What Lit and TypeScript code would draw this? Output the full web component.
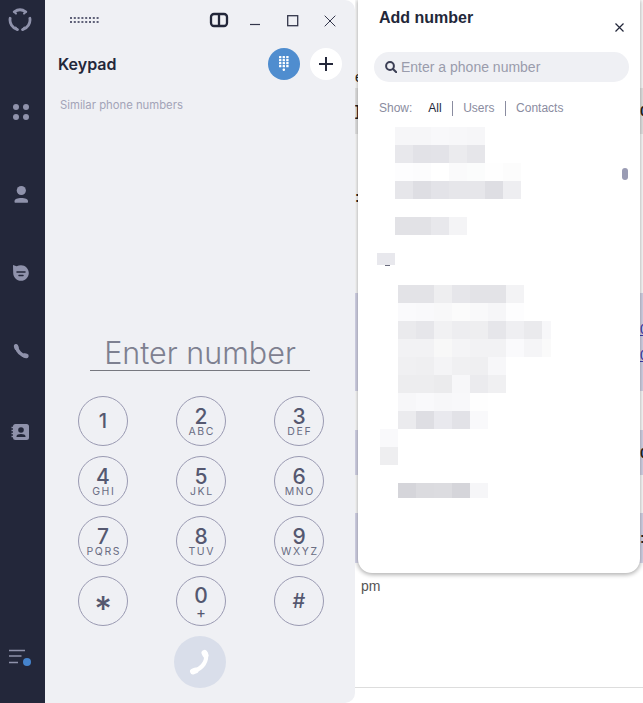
import { LitElement, html, css, svg } from "lit";
import { customElement } from "lit/decorators.js";

const KEYS: [string, string][] = [
  ["1", ""], ["2", "ABC"], ["3", "DEF"],
  ["4", "GHI"], ["5", "JKL"], ["6", "MNO"],
  ["7", "PQRS"], ["8", "TUV"], ["9", "WXYZ"],
  ["*", ""], ["0", "+"], ["#", ""],
];

// redacted contact rows: left indent from list edge, gap above, height, cell colours
const MOSAIC: { x: number; gap: number; h: number; cells: string[]; half?: string }[] = [
  { x: 0, gap: 0, h: 18, cells: ["f6f6f8", "f6f6f8", "f8f8fa", "f7f7f9", "f6f6f8"] },
  { x: 0, gap: 0, h: 18, cells: ["e8e8ec", "e2e2e7", "e3e3e8", "ebebee", "e6e6ea"] },
  { x: 0, gap: 0, h: 18, cells: ["fdfdfe", "fcfcfd", "ffffff", "fafafb", "fbfcfc", "fefefe", "fcfcfc"] },
  { x: 0, gap: 0, h: 18, cells: ["e6e6ea", "dedee3", "e3e3e8", "e6e6ea", "e6e6ea", "dedee3", "eeeef1"] },
  { x: 0, gap: 18, h: 18, cells: ["e2e2e6", "e2e2e6", "e8e8ec", "f4f4f6"] },
  { x: -18, gap: 18, h: 12, cells: ["e8e8ed"] },
  { x: 3, gap: 19, h: 18, cells: ["e3e3e7", "e3e3e7", "eeeef0", "e6e6ea", "e3e3e7", "e3e3e7", "f3f3f5"] },
  { x: 3, gap: 0, h: 18, cells: ["fafafc", "f9f9fb", "f8f8f9", "fbfbfb", "f9f9fa", "f6f6f8", "fdfdfe"] },
  { x: 3, gap: 0, h: 18, cells: ["eaeaed", "e6e6ea", "f1f1f3", "ededf0", "eeeef0", "e6e6ea", "efeff2", "eaeaed"], half: "f7f7f9" },
  { x: 3, gap: 0, h: 18, cells: ["f2f2f4", "f2f2f4", "f8f8f8", "f4f4f6", "f2f2f4", "f2f2f4", "fafafc", "f5f5f7"], half: "fafafa" },
  { x: 3, gap: 0, h: 18, cells: ["f0f0f2", "efeff1", "f4f4f6", "f0f0f2", "efeff1", "f7f7f9"] },
  { x: 3, gap: 0, h: 18, cells: ["ededef", "ededef", "ebebed", "f7f7f9", "ebebee", "f0f0f2"] },
  { x: 3, gap: 0, h: 18, cells: ["f7f7f9", "f9f9fb", "f7f7f9", "f8f8fa", "fefefe"] },
  { x: 3, gap: 0, h: 18, cells: ["ebebee", "dedee3", "e9e9ee", "e2e2e7", "f9f9fb"] },
  { x: -15, gap: 0, h: 18, cells: ["f9f9fb"] },
  { x: -15, gap: 0, h: 18, cells: ["eeeef0"] },
  { x: 3, gap: 18, h: 15, cells: ["d5d5da", "dbdbdf", "dcdce0", "d5d5da", "f6f6f8"] },
];

const dots = svg`${[0, 1].map((r) =>
  [0, 1, 2, 3, 4, 5, 6, 7].map(
    (c) => svg`<rect x=${c * 3.8} y=${r * 4} width="2" height="2" fill="#5f6178"></rect>`
  )
)}`;

@customElement("app-root")
export class AppRoot extends LitElement {
  static styles = css`
    :host {
      display: block;
      width: 643px;
      height: 703px;
      overflow: hidden;
      background: #fff;
      font-family: "Liberation Sans", sans-serif;
    }
    .app {
      display: flex;
      height: 703px;
    }
    .side {
      flex: 0 0 45px;
      background: #23273a;
      display: flex;
      flex-direction: column;
      padding: 8px 0 31px 9px;
      box-sizing: border-box;
      position: relative;
      z-index: 3;
    }
    .side svg {
      display: block;
      width: 24px;
      height: 24px;
      flex: none;
    }
    .side svg:nth-child(1) { margin-left: -1px; }
    .side svg:nth-child(2) { margin-top: 68px; }
    .side svg:nth-child(3) { margin-top: 59px; }
    .side svg:nth-child(4) { margin-top: 54px; }
    .side svg:nth-child(5) { margin-top: 54px; }
    .side svg:nth-child(6) { margin-top: 57px; }
    .side svg:nth-child(7) { margin-top: auto; }

    .panel {
      flex: 0 0 310px;
      background: #eff0f4;
      border-radius: 0 10px 10px 0;
      display: flex;
      flex-direction: column;
      box-sizing: border-box;
      padding-bottom: 15px;
      position: relative;
      z-index: 2;
    }
    .topbar {
      height: 48px;
      display: flex;
      align-items: flex-start;
      flex: none;
    }
    .grip { width: 30px; height: 6px; margin: 17px 0 0 25px; display: block; }
    .winbtns { display: flex; margin-left: auto; }
    .winbtns svg { display: block; }
    .split { width: 20px; height: 16px; margin: 12px 0 0 0; }
    .min { width: 12px; height: 12px; margin: 14px 0 0 20px; }
    .max { width: 12px; height: 12px; margin: 14.5px 0 0 26px; }
    .close { width: 12px; height: 12px; margin: 14.5px 19px 0 25px; }

    .head {
      display: flex;
      align-items: center;
      height: 32px;
      flex: none;
      padding: 0 13px;
    }
    .title {
      font: 600 16px Inter, sans-serif;
      color: #23273a;
    }
    .round {
      width: 32px;
      height: 32px;
      border-radius: 50%;
      display: flex;
      align-items: center;
      justify-content: center;
    }
    .round.blue { background: #4f8dcf; margin-left: auto; }
    .round.white { background: #fff; margin-left: 10px; }
    .similar {
      font: 400 11.3px Inter, sans-serif;
      color: #a3a4b8;
      margin: 18px 0 0 15px;
      line-height: 14px;
    }
    .number {
      margin: auto 45px 0 45px;
      height: 37px;
      border-bottom: 1px solid #77787f;
      font: 300 30.5px Inter, sans-serif;
      line-height: 39px;
      color: #7e8090;
      text-align: center;
    }
    .keys {
      display: grid;
      grid-template-columns: repeat(3, 50px);
      column-gap: 48px;
      row-gap: 10px;
      margin: 25px 0 0 33px;
    }
    .key {
      width: 50px;
      height: 50px;
      box-sizing: border-box;
      border: 1px solid #9a9ab2;
      border-radius: 50%;
      display: flex;
      flex-direction: column;
      align-items: center;
      justify-content: center;
      color: #555870;
      font-family: Inter, sans-serif;
    }
    .digit { font-size: 21px; font-weight: 500; line-height: 21px; }
    .letters {
      font-size: 10.5px;
      line-height: 10px;
      letter-spacing: 1.6px;
      margin-right: -1.6px;
      color: #696c82;
    }
    .key.solo .digit { font-size: 20px; }
    .key.star .digit { font-size: 34px; line-height: 34px; padding-top: 15px; }
    .key.plus .letters { font-size: 15px; letter-spacing: 0; margin: 1px 0 -2px; line-height: 12px; color: #555870; }
    .call {
      width: 52px;
      height: 52px;
      border-radius: 50%;
      background: #d9deea;
      margin: 10px auto 0;
      display: flex;
      align-items: center;
      justify-content: center;
      flex: none;
    }

    .main {
      flex: 1;
      position: relative;
      min-width: 0;
      display: flex;
      flex-direction: column;
      font-size: 14px;
      color: #222;
      overflow: hidden;
    }
    .row {
      display: grid;
      grid-template-columns: 285px 3px;
      flex: none;
      box-sizing: border-box;
    }
    .row span { display: block; }
    .r0 { height: 88px; align-items: end; }
    .r1 { height: 46px; background: #e9e9e9; align-items: center; font-weight: 700; }
    .r2 { height: 159px; padding-top: 55px; font-weight: 700; align-items: start; }
    .r3 { height: 98px; background: #d8d8ec; align-items: center; }
    .r4 { height: 39px; }
    .r5 { height: 45px; background: #d8d8ec; align-items: center; font-weight: 700; }
    .r6 { height: 38px; }
    .r7 { height: 50px; background: #d8d8ec; align-items: center; font-weight: 700; }
    .r8 { height: 14px; }
    .r0 span { line-height: 18px; margin-bottom: 2px; }
    .links a { display: block; color: #3b3bb0; text-decoration: underline; line-height: 26px; }
    .pm {
      flex: none;
      height: 111px;
      box-sizing: border-box;
      padding-left: 6px;
      line-height: 18px;
      color: #555;
      border-bottom: 1px solid #ddd;
    }

    .popup {
      position: absolute;
      left: 3px;
      top: 0;
      width: 282px;
      height: 573px;
      box-sizing: border-box;
      background: #fff;
      border-radius: 0 0 14px 14px;
      box-shadow: 0 1px 4px 1px rgba(0, 0, 0, 0.3);
      padding: 9px 0 0 0;
      display: flex;
      flex-direction: column;
    }
    .ptop {
      display: flex;
      padding: 0 16px 0 21px;
      height: 35px;
      flex: none;
    }
    .ptitle {
      font-weight: 700;
      font-size: 16px;
      line-height: 18px;
      color: #23273a;
    }
    .pclose { width: 9px; height: 9px; margin: 14px 0 0 auto; display: block; }
    .search {
      margin: 8px 11px 0 16px;
      height: 30px;
      border-radius: 15px;
      background: #eff0f4;
      display: flex;
      align-items: center;
      padding-left: 11px;
      gap: 4px;
      font-size: 14px;
      color: #9a9cac;
      flex: none;
    }
    .filters {
      display: flex;
      align-items: center;
      margin: 18px 0 0 21px;
      height: 16px;
      font-size: 12px;
      color: #8a8ca0;
      flex: none;
    }
    .filters .all { color: #23273a; margin-left: 16px; }
    .sep { width: 1px; height: 15px; background: #8a8ca0; margin: 0 10px 0 10.5px; }
    .list { margin: 11px 0 0 37px; }
    .mrow { display: flex; }
    .mrow i { display: block; width: 18px; height: 100%; flex: none; }
    .mrow i.half { width: 9px; }
    .dash { width: 5px; height: 1px; background: #6a6c7e; margin-left: -10px; }
    .thumb {
      position: absolute;
      left: 264px;
      top: 168px;
      width: 6px;
      height: 12px;
      border-radius: 3px;
      background: #9a9cb4;
    }
  `;

  render() {
    return html`
      <div class="app">
        <nav class="side">
          <svg viewBox="0 0 24 24" fill="none" stroke="#8f92ab" stroke-width="2.8" stroke-linecap="round">
            <path d="M6.26 3.81A10 10 0 0 1 17.74 3.81"></path>
            <path d="M2.15 10.26A10 10 0 0 0 9.41 21.66"></path>
            <path d="M21.85 10.26A10 10 0 0 1 14.59 21.66"></path>
            <path d="M6.3 3.8L8 5.6M17.7 3.800L16 5.600" stroke-width="2"></path>
            <path d="M9.400 21.600L7.500 19.500M14.600 21.600L16.500 19.500" stroke-width="2"></path>
          </svg>
          <svg viewBox="0 0 24 24" fill="#8f92ab">
            <circle cx="7" cy="7" r="3"></circle><circle cx="17" cy="7" r="3"></circle>
            <circle cx="7" cy="17" r="3"></circle><circle cx="17" cy="17" r="3"></circle>
          </svg>
          <svg viewBox="0 0 24 24" fill="#8f92ab">
            <circle cx="12.3" cy="7.5" r="4.6"></circle>
            <path d="M5.500 18.500c0-2.600 3-3.500 6.800-3.500s6.700.9 6.700 3.500v.5c0 .4-.3.7-.7.7H6.200c-.4 0-.7-.3-.7-.7z"></path>
          </svg>
          <svg viewBox="0 0 24 24">
            <path fill="#8f92ab" d="M4 4l3.600 1.200C9 4.500 10.500 4.200 12 4.200c4.300 0 7.800 3.500 7.800 7.800s-3.500 7.800-7.800 7.800-7.800-3.500-7.800-7.800c0-1.500-.2-5-.2-8z"></path>
            <path stroke="#23273a" stroke-width="1.500" stroke-linecap="round" d="M8 11h8M10 14.600h4"></path>
          </svg>
          <svg viewBox="0 0 24 24" fill="none" stroke="#8f92ab" stroke-linecap="round">
            <path stroke-width="3.400" d="M7.500 7.500C8 12 12 16.500 17 17"></path>
            <path stroke-width="4.400" d="M7 7.200L7.500 9"></path>
            <path stroke-width="4.400" d="M15.500 16.500l2 .5"></path>
          </svg>
          <svg viewBox="0 0 24 24">
            <rect x="4" y="4" width="16" height="16" rx="2.500" fill="#8f92ab"></rect>
            <path stroke="#8f92ab" stroke-width="1.500" d="M2.500 7.500h3M2.500 10.500h3M2.500 13.500h3M2.500 16.500h3"></path>
            <circle cx="12" cy="10" r="2.800" fill="#23273a"></circle>
            <path fill="#23273a" d="M7.500 16.500c0-1.800 2-2.500 4.500-2.500s4.500.7 4.500 2.500v.5h-9z"></path>
          </svg>
          <svg viewBox="0 0 24 24" fill="none">
            <path stroke="#8f92ab" stroke-width="1.600" d="M0 2.500h16M0 8h12.500M0 14.500h9"></path>
            <circle cx="18" cy="14" r="4" fill="#4583cc"></circle>
          </svg>
        </nav>

        <section class="panel">
          <div class="topbar">
            <svg class="grip" viewBox="0 0 30 6">${dots}</svg>
            <div class="winbtns">
              <svg class="split" viewBox="0 0 20 16" fill="none" stroke="#23273a" stroke-width="2.300">
                <rect x="2" y="2" width="16" height="12" rx="3"></rect>
                <path d="M10 2v12"></path>
              </svg>
              <svg class="min" viewBox="0 0 12 12"><path d="M1 10.500h10" stroke="#33364a" stroke-width="1.200"></path></svg>
              <svg class="max" viewBox="0 0 12 12" fill="none"><rect x=".7" y=".7" width="10" height="10" stroke="#33364a" stroke-width="1.300"></rect></svg>
              <svg class="close" viewBox="0 0 12 12" fill="none"><path d="M.7.700l10.600 10.600M11.300.700L.7 11.300" stroke="#33364a" stroke-width="1"></path></svg>
            </div>
          </div>
          <div class="head">
            <div class="title">Keypad</div>
            <div class="round blue">
              <svg width="12" height="16" viewBox="0 0 12 16" fill="#fff">
                ${[0, 1, 2, 3].map((r) =>
                  [0, 1, 2].map(
                    (c) => svg`<rect x=${1 + c * 3.6} y=${r * 3} width="2.400" height="2.200" rx=".5"></rect>`
                  )
                )}
                <rect x="4.600" y="12.500" width="2.400" height="2.400" rx=".8"></rect>
              </svg>
            </div>
            <div class="round white">
              <svg width="16" height="16" viewBox="0 0 16 16"><path d="M8 1v14M1 8h14" stroke="#23273a" stroke-width="2"></path></svg>
            </div>
          </div>
          <div class="similar">Similar phone numbers</div>
          <div class="number">Enter number</div>
          <div class="keys">
            ${KEYS.map(
              ([d, l]) => html`<div class="key ${l ? "" : "solo"} ${d === "*" ? "star" : ""} ${l === "+" ? "plus" : ""}">
                <span class="digit">${d}</span>
                ${l ? html`<span class="letters">${l}</span>` : ""}
              </div>`
            )}
          </div>
          <div class="call">
            <svg width="24" height="28" viewBox="0 0 24 28" fill="none" stroke="#fff" stroke-linecap="round">
              <path stroke-width="4.200" d="M17.500 5C20 13 14 21 5.500 23"></path>
              <path stroke-width="6" d="M16.500 5l1 2"></path>
              <path stroke-width="6" d="M5 23.500l2.500-1"></path>
            </svg>
          </div>
        </section>

        <main class="main">
          <div class="row r0"><span>e</span></div>
          <div class="row r1"><span>]</span><span>0</span></div>
          <div class="row r2"><span>:</span></div>
          <div class="row r3">
            <span></span>
            <span class="links"><a>0</a><a>0</a></span>
          </div>
          <div class="row r4"></div>
          <div class="row r5"><span></span><span>0</span></div>
          <div class="row r6"></div>
          <div class="row r7"><span></span><span>:</span></div>
          <div class="row r8"></div>
          <div class="pm">pm</div>

          <aside class="popup">
            <div class="ptop">
              <div class="ptitle">Add number</div>
              <svg class="pclose" viewBox="0 0 9 9" fill="none"><path d="M.5.500l8 8M8.500.500l-8 8" stroke="#23273a" stroke-width="1.200"></path></svg>
            </div>
            <div class="search">
              <svg width="12" height="12" viewBox="0 0 12 12" fill="none" stroke="#3c3f55" stroke-width="2">
                <circle cx="5" cy="5" r="3.900"></circle>
                <path d="M8 8l3.300 3.300" stroke-linecap="round"></path>
              </svg>
              <span>Enter a phone number</span>
            </div>
            <div class="filters">
              <span>Show:</span>
              <span class="all">All</span>
              <span class="sep"></span>
              <span>Users</span>
              <span class="sep"></span>
              <span>Contacts</span>
            </div>
            <div class="list">
              ${MOSAIC.map(
                (m) => html`<div
                    class="mrow"
                    style="margin-left:${m.x}px;margin-top:${m.gap}px;height:${m.h}px"
                  >
                    ${m.cells.map((c) => html`<i style="background:#${c}"></i>`)}
                    ${m.half ? html`<i class="half" style="background:#${m.half}"></i>` : ""}
                  </div>
                  ${m.h === 12 ? html`<div class="dash"></div>` : ""}`
              )}
            </div>
            <div class="thumb"></div>
          </aside>
        </main>
      </div>
    `;
  }
}
